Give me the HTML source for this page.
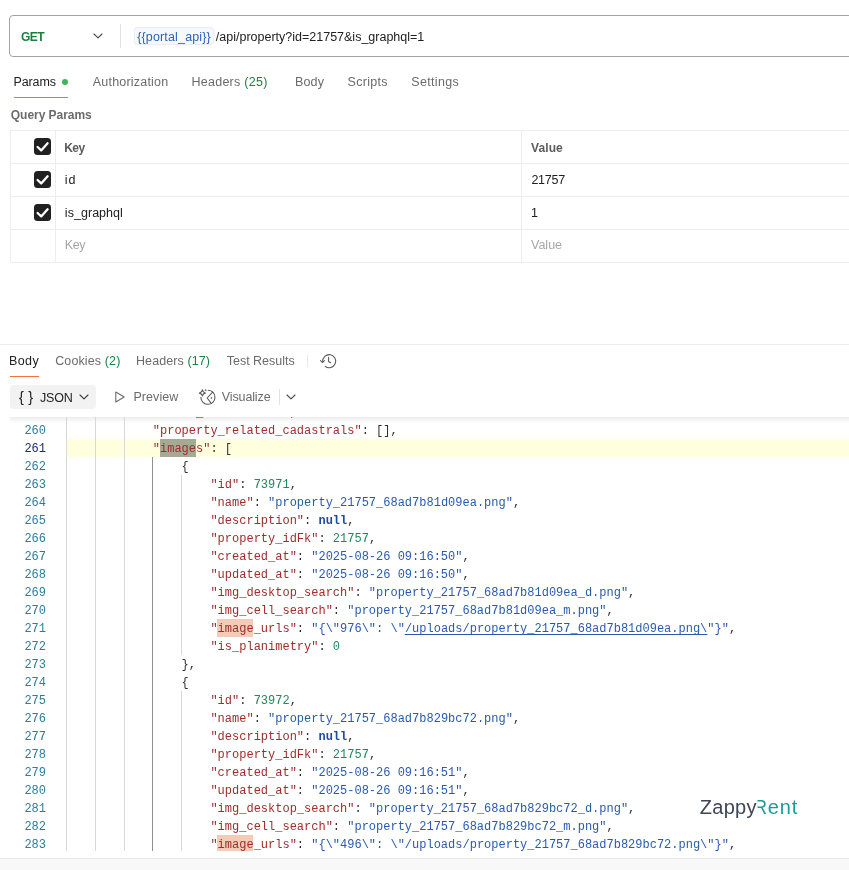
<!DOCTYPE html>
<html lang="en">
<head>
<meta charset="utf-8">
<title>Postman - GET property</title>
<style>
*{box-sizing:border-box;margin:0;padding:0}
html,body{width:849px;height:870px;overflow:hidden;background:#fff}
body{position:relative;font-family:"Liberation Sans",sans-serif;font-size:12.5px;color:#212121;-webkit-font-smoothing:antialiased}
#wrap{position:absolute;left:0;top:0;width:849px;height:870px;will-change:transform}
.abs{position:absolute;white-space:nowrap}
.t{position:absolute;white-space:nowrap;line-height:16px;height:16px}
.gray{color:#6b6b6b}
.green{color:#1a8242}
.b{font-weight:bold;font-size:12px}

/* URL bar */
#urlbox{left:9px;top:15px;width:860px;height:42px;border:1px solid #a3a3a3;border-radius:4px;background:#fff}
#sep1{left:120px;top:24px;width:1px;height:24px;background:#e3e3e3}
#var{left:134px;top:27px;height:18px;width:80px;background:#f5f8fd;border:1px solid #e8edf6;border-radius:3px}

/* tabs */
.ul{position:absolute;height:1px;background:#f2703c}

/* table */
#tbl{left:10px;top:130px;width:860px;height:133px;border:1px solid #ededed}
.hl{position:absolute;left:10px;width:860px;height:1px;background:#ededed}
.vl{position:absolute;top:130px;height:133px;width:1px;background:#ededed}
.cb{position:absolute;left:33.6px;margin-top:.4px;width:17px;height:17px;border-radius:3.5px;background:#212121}
.cb svg{position:absolute;left:0;top:0}

/* response toolbar */
#jsonbtn{left:10px;top:385px;width:86px;height:24px;border-radius:4px;background:#f2f2f2}

/* editor */
#ed{left:0;top:417px;width:849px;height:434px;overflow:hidden;background:#fff;font-family:"Liberation Mono","DejaVu Sans Mono",monospace;font-size:12px}
#edin{position:absolute;left:0;top:4px;width:849px;height:440px}
.ln{position:absolute;left:66px;height:18px;line-height:20px;white-space:pre;width:800px;color:#303030}
.ln.cur{background:#ffffde}
.no{position:absolute;left:0;width:46px;text-align:right;height:18px;line-height:20px;color:#2e7c9a}
.no.act{color:#1d2a6e}
.k{color:#a12d2d}
.s{color:#2a5ab0}
.n{color:#1f8a5c}
.u{color:#1f4a9c;font-weight:bold}
.p{color:#303030}
.hb{position:absolute;top:0;height:18px;width:36px}
.tx{position:relative;left:.4px}
.m{background:#f3cbb6}
.cm{background:#a6aa95}
.lnk{text-decoration:underline;text-underline-offset:2px}
.g{position:absolute;width:1px;background:#d8d8d8;z-index:2}
.g.ga{background:#8f8f8f}
#shadow{left:10px;top:417px;width:839px;height:6px;background:linear-gradient(to bottom,rgba(0,0,0,.075),rgba(0,0,0,0))}

#foot{left:0;top:858px;width:849px;height:12px;background:#f8f8f8;border-top:1px solid #e9e9e9}

/* logo */
.lg{font-size:20px;line-height:24px;height:24px}
#tget{margin-left:0.0px;letter-spacing:-0.5px}
#vartxt{margin-left:0.2px;letter-spacing:0.153px}
#urltxt{margin-left:-0.2px;letter-spacing:-0.0px}
#tparams{margin-left:-0.6px;letter-spacing:-0.08px}
#tauth{margin-left:0.8px;letter-spacing:0.2px}
#thead{margin-left:-0.6px;letter-spacing:0.272px}
#tbody{margin-left:0.0px;letter-spacing:0.134px}
#tscr{margin-left:-0.4px;letter-spacing:0.266px}
#tset{margin-left:-0.8px;letter-spacing:0.342px}
#qp{margin-left:0.8px;letter-spacing:-0.036px}
#hkey{margin-left:0.2px;letter-spacing:-0.5px}
#hval{margin-left:0.0px;letter-spacing:0.1px}
#kid{margin-left:-0.2px;letter-spacing:0.8px}
#vid{margin-left:0.4px;letter-spacing:-0.25px}
#kgq{margin-left:-0.2px;letter-spacing:0.044px}
#vgq{margin-left:-1.0px;letter-spacing:-4.0px}
#pkey{margin-left:-0.2px;letter-spacing:-0.4px}
#pval{margin-left:0.0px;letter-spacing:0.0px}
#rbody{margin-left:-1.0px;letter-spacing:0.4px}
#rcook{margin-left:0.2px;letter-spacing:0.12px}
#rhead{margin-left:-1.0px;letter-spacing:0.091px}
#rtest{margin-left:0.8px;letter-spacing:-0.017px}
#jtxt{margin-left:0.0px;letter-spacing:-0.199px}
#prev{margin-left:-0.6px;letter-spacing:0.067px}
#vist{margin-left:0.8px;letter-spacing:-0.125px}

</style>
</head>
<body>
<div id="wrap">

<!-- URL bar -->
<div class="abs" id="urlbox"></div>
<div class="t b" id="tget" style="left:21px;top:29px;color:#1b7f3b">GET</div>
<svg class="abs" style="left:92px;top:31px" width="12" height="10" viewBox="0 0 12 10"><path d="M2 3 L6 6.8 L10 3" fill="none" stroke="#4a4a4a" stroke-width="1.1" stroke-linecap="round" stroke-linejoin="round"/></svg>
<div class="abs" id="sep1"></div>
<div class="abs" id="var"></div>
<div class="t" id="vartxt" style="left:137px;top:29px;color:#2f63b8">{{portal_api}}</div>
<div class="t" id="urltxt" style="left:216px;top:29px;color:#212121">/api/property?id=21757&amp;is_graphql=1</div>

<!-- request tabs -->
<div class="t" id="tparams" style="left:14px;top:74px">Params</div>
<div class="abs" style="left:62px;top:79px;width:6px;height:6px;border-radius:50%;background:#3fb55b"></div>
<div class="ul" style="left:14px;top:97px;width:54px"></div>
<div class="t gray" id="tauth" style="left:92px;top:74px">Authorization</div>
<div class="t gray" id="thead" style="left:192px;top:74px">Headers <span class="green">(25)</span></div>
<div class="t gray" id="tbody" style="left:295px;top:74px">Body</div>
<div class="t gray" id="tscr" style="left:348px;top:74px">Scripts</div>
<div class="t gray" id="tset" style="left:412px;top:74px">Settings</div>

<div class="t gray b" id="qp" style="left:10px;top:107px">Query Params</div>

<!-- params table -->
<div class="abs" id="tbl"></div>
<div class="hl" style="top:163px"></div>
<div class="hl" style="top:196px"></div>
<div class="hl" style="top:229px"></div>
<div class="vl" style="left:55px"></div>
<div class="vl" style="left:521px"></div>

<div class="cb" style="top:138px"><svg width="17" height="17" viewBox="0 0 17 17"><path d="M3.6 9 L7.2 12.4 L13.6 5.3" fill="none" stroke="#fff" stroke-width="2.3" stroke-linecap="round" stroke-linejoin="round"/></svg></div>
<div class="cb" style="top:171px"><svg width="17" height="17" viewBox="0 0 17 17"><path d="M3.6 9 L7.2 12.4 L13.6 5.3" fill="none" stroke="#fff" stroke-width="2.3" stroke-linecap="round" stroke-linejoin="round"/></svg></div>
<div class="cb" style="top:204px"><svg width="17" height="17" viewBox="0 0 17 17"><path d="M3.6 9 L7.2 12.4 L13.6 5.3" fill="none" stroke="#fff" stroke-width="2.3" stroke-linecap="round" stroke-linejoin="round"/></svg></div>

<div class="t b" id="hkey" style="left:64px;top:140px;color:#5c5c5c">Key</div>
<div class="t b" id="hval" style="left:531px;top:140px;color:#5c5c5c">Value</div>
<div class="t" id="kid" style="left:65px;top:172px">id</div>
<div class="t" id="vid" style="left:531px;top:172px">21757</div>
<div class="t" id="kgq" style="left:65px;top:205px">is_graphql</div>
<div class="t" id="vgq" style="left:532px;top:205px">1</div>
<div class="t" id="pkey" style="left:65px;top:237px;color:#a6a6a6">Key</div>
<div class="t" id="pval" style="left:531px;top:237px;color:#a6a6a6">Value</div>

<!-- pane divider -->
<div class="abs" style="left:0;top:344px;width:849px;height:1px;background:#ededed"></div>
<!-- response tabs -->
<div class="t" id="rbody" style="left:10px;top:353px">Body</div>
<div class="ul" style="left:10px;top:376px;width:29px"></div>
<div class="t gray" id="rcook" style="left:55px;top:353px">Cookies <span class="green">(2)</span></div>
<div class="t gray" id="rhead" style="left:137px;top:353px">Headers <span class="green">(17)</span></div>
<div class="t gray" id="rtest" style="left:226px;top:353px">Test Results</div>
<div class="abs" style="left:307px;top:355px;width:1px;height:12px;background:#e8e8e8"></div>
<svg class="abs" id="hist" style="left:319px;top:352px" width="19" height="18" viewBox="0 0 19 18"><g fill="none" stroke="#555" stroke-width="1.05" stroke-linecap="round" stroke-linejoin="round"><path d="M3.7 9.6 A6.5 6.5 0 1 1 6.2 14.3"/><path d="M1.4 8.5 L3.3 10.5 L5.6 8.7"/><path d="M9.6 5.3 V9.5 L11.7 10.8"/></g></svg>

<!-- response toolbar -->
<div class="abs" id="jsonbtn"></div>
<div class="t" id="jbr" style="left:18.9px;top:388.5px;font-size:14.5px;letter-spacing:4.6px">{}</div>
<div class="t" id="jtxt" style="left:40px;top:390px">JSON</div>
<svg class="abs" style="left:78px;top:392px" width="12" height="10" viewBox="0 0 12 10"><path d="M2 3 L6 6.8 L10 3" fill="none" stroke="#3a3a3a" stroke-width="1.1" stroke-linecap="round" stroke-linejoin="round"/></svg>
<svg class="abs" id="play" style="left:114px;top:390px" width="12" height="14" viewBox="0 0 12 14"><path d="M1.8 2 L10.2 7 L1.8 12 Z" fill="none" stroke="#6b6b6b" stroke-width="1.1" stroke-linejoin="round"/></svg>
<div class="t gray" id="prev" style="left:134px;top:389px">Preview</div>
<svg class="abs" id="vis" style="left:194px;top:384px" width="28" height="26" viewBox="0 0 28 26"><g fill="none" stroke="#5a5a5a" stroke-width="1.1" stroke-linecap="round" stroke-linejoin="round"><path d="M14.3 6.2 A7.05 7.05 0 1 1 6.9 13.4"/><path d="M18.6 8.2 L13.2 14 L16.9 18.9"/><path d="M8.4 5.9 Q8.9 8.6 11.3 9.1 Q8.9 9.6 8.4 11.9 Q7.9 9.6 5.4 9.1 Q7.9 8.6 8.4 5.9 Z"/><path d="M11.7 5.5 L12.5 6.3 L11.7 7.1 L10.9 6.3 Z" fill="#5a5a5a" stroke-width=".4"/><ellipse cx="17.3" cy="13.9" rx=".35" ry=".75" fill="#5a5a5a" stroke-width=".5"/></g></svg>
<div class="t gray" id="vist" style="left:221px;top:389px">Visualize</div>
<div class="abs" style="left:279px;top:389px;width:1px;height:16px;background:#e3e3e3"></div>
<svg class="abs" style="left:285px;top:392px" width="12" height="10" viewBox="0 0 12 10"><path d="M2 3 L6 6.8 L10 3" fill="none" stroke="#4a4a4a" stroke-width="1.1" stroke-linecap="round" stroke-linejoin="round"/></svg>

<!-- editor -->
<div class="abs" id="ed"><div id="edin">
<i class="g" style="left:66px;top:-18px;height:468px"></i><i class="g" style="left:95px;top:-18px;height:468px"></i><i class="g" style="left:124px;top:-18px;height:468px"></i><i class="g ga" style="left:152px;top:36px;height:414px"></i><i class="g" style="left:181px;top:54px;height:180px"></i><i class="g" style="left:181px;top:270px;height:180px"></i>
<div class="no" style="top:-18px">259</div>
<div class="no" style="top:0px">260</div>
<div class="no act" style="top:18px">261</div>
<div class="no" style="top:36px">262</div>
<div class="no" style="top:54px">263</div>
<div class="no" style="top:72px">264</div>
<div class="no" style="top:90px">265</div>
<div class="no" style="top:108px">266</div>
<div class="no" style="top:126px">267</div>
<div class="no" style="top:144px">268</div>
<div class="no" style="top:162px">269</div>
<div class="no" style="top:180px">270</div>
<div class="no" style="top:198px">271</div>
<div class="no" style="top:216px">272</div>
<div class="no" style="top:234px">273</div>
<div class="no" style="top:252px">274</div>
<div class="no" style="top:270px">275</div>
<div class="no" style="top:288px">276</div>
<div class="no" style="top:306px">277</div>
<div class="no" style="top:324px">278</div>
<div class="no" style="top:342px">279</div>
<div class="no" style="top:360px">280</div>
<div class="no" style="top:378px">281</div>
<div class="no" style="top:396px">282</div>
<div class="no" style="top:414px">283</div>
<div class="ln" style="top:-18px"><span class="tx"><span class="p">            </span><span class="k">"built_area"</span><span class="p">: </span><span class="n">120.0</span><span class="p">,</span></span></div>
<div class="ln" style="top:0px"><span class="tx"><span class="p">            </span><span class="k">"property_related_cadastrals"</span><span class="p">: [],</span></span></div>
<div class="ln cur" style="top:18px"><i class="hb cm" style="left:93.6px"></i><span class="tx"><span class="p">            </span><span class="k">"images"</span><span class="p">: [</span></span></div>
<div class="ln" style="top:36px"><span class="tx"><span class="p">                {</span></span></div>
<div class="ln" style="top:54px"><span class="tx"><span class="p">                    </span><span class="k">"id"</span><span class="p">: </span><span class="n">73971</span><span class="p">,</span></span></div>
<div class="ln" style="top:72px"><span class="tx"><span class="p">                    </span><span class="k">"name"</span><span class="p">: </span><span class="s">"property_21757_68ad7b81d09ea.png"</span><span class="p">,</span></span></div>
<div class="ln" style="top:90px"><span class="tx"><span class="p">                    </span><span class="k">"description"</span><span class="p">: </span><span class="u">null</span><span class="p">,</span></span></div>
<div class="ln" style="top:108px"><span class="tx"><span class="p">                    </span><span class="k">"property_idFk"</span><span class="p">: </span><span class="n">21757</span><span class="p">,</span></span></div>
<div class="ln" style="top:126px"><span class="tx"><span class="p">                    </span><span class="k">"created_at"</span><span class="p">: </span><span class="s">"2025-08-26 09:16:50"</span><span class="p">,</span></span></div>
<div class="ln" style="top:144px"><span class="tx"><span class="p">                    </span><span class="k">"updated_at"</span><span class="p">: </span><span class="s">"2025-08-26 09:16:50"</span><span class="p">,</span></span></div>
<div class="ln" style="top:162px"><span class="tx"><span class="p">                    </span><span class="k">"img_desktop_search"</span><span class="p">: </span><span class="s">"property_21757_68ad7b81d09ea_d.png"</span><span class="p">,</span></span></div>
<div class="ln" style="top:180px"><span class="tx"><span class="p">                    </span><span class="k">"img_cell_search"</span><span class="p">: </span><span class="s">"property_21757_68ad7b81d09ea_m.png"</span><span class="p">,</span></span></div>
<div class="ln" style="top:198px"><i class="hb m" style="left:151.2px"></i><span class="tx"><span class="p">                    </span><span class="k">"image_urls"</span><span class="p">: </span><span class="s">"{\"976\": \"<span class="lnk">/uploads/property_21757_68ad7b81d09ea.png\</span>"}"</span><span class="p">,</span></span></div>
<div class="ln" style="top:216px"><span class="tx"><span class="p">                    </span><span class="k">"is_planimetry"</span><span class="p">: </span><span class="n">0</span></span></div>
<div class="ln" style="top:234px"><span class="tx"><span class="p">                },</span></span></div>
<div class="ln" style="top:252px"><span class="tx"><span class="p">                {</span></span></div>
<div class="ln" style="top:270px"><span class="tx"><span class="p">                    </span><span class="k">"id"</span><span class="p">: </span><span class="n">73972</span><span class="p">,</span></span></div>
<div class="ln" style="top:288px"><span class="tx"><span class="p">                    </span><span class="k">"name"</span><span class="p">: </span><span class="s">"property_21757_68ad7b829bc72.png"</span><span class="p">,</span></span></div>
<div class="ln" style="top:306px"><span class="tx"><span class="p">                    </span><span class="k">"description"</span><span class="p">: </span><span class="u">null</span><span class="p">,</span></span></div>
<div class="ln" style="top:324px"><span class="tx"><span class="p">                    </span><span class="k">"property_idFk"</span><span class="p">: </span><span class="n">21757</span><span class="p">,</span></span></div>
<div class="ln" style="top:342px"><span class="tx"><span class="p">                    </span><span class="k">"created_at"</span><span class="p">: </span><span class="s">"2025-08-26 09:16:51"</span><span class="p">,</span></span></div>
<div class="ln" style="top:360px"><span class="tx"><span class="p">                    </span><span class="k">"updated_at"</span><span class="p">: </span><span class="s">"2025-08-26 09:16:51"</span><span class="p">,</span></span></div>
<div class="ln" style="top:378px"><span class="tx"><span class="p">                    </span><span class="k">"img_desktop_search"</span><span class="p">: </span><span class="s">"property_21757_68ad7b829bc72_d.png"</span><span class="p">,</span></span></div>
<div class="ln" style="top:396px"><span class="tx"><span class="p">                    </span><span class="k">"img_cell_search"</span><span class="p">: </span><span class="s">"property_21757_68ad7b829bc72_m.png"</span><span class="p">,</span></span></div>
<div class="ln" style="top:414px"><i class="hb m" style="left:151.2px"></i><span class="tx"><span class="p">                    </span><span class="k">"image_urls"</span><span class="p">: </span><span class="s">"{\"496\": \"/uploads/property_21757_68ad7b829bc72.png\"}"</span><span class="p">,</span></span></div>
</div></div>
<div class="abs" id="shadow"></div>

<!-- logo -->
<div class="t lg" id="lgz" style="left:699.8px;top:795.2px;color:#3e4656;letter-spacing:.25px">Zappy</div>
<div class="t lg" id="lgr" style="left:753.9px;top:795.2px;color:#1b9d9c;transform:scaleX(.9);transform-origin:0 0;clip-path:inset(0 0 0 3.9px)">R</div>
<div class="t lg" id="lge" style="left:767.8px;top:795.2px;color:#1b9d9c;letter-spacing:.9px">ent</div>

<div class="abs" id="foot"></div>
</div>
</body>
</html>
